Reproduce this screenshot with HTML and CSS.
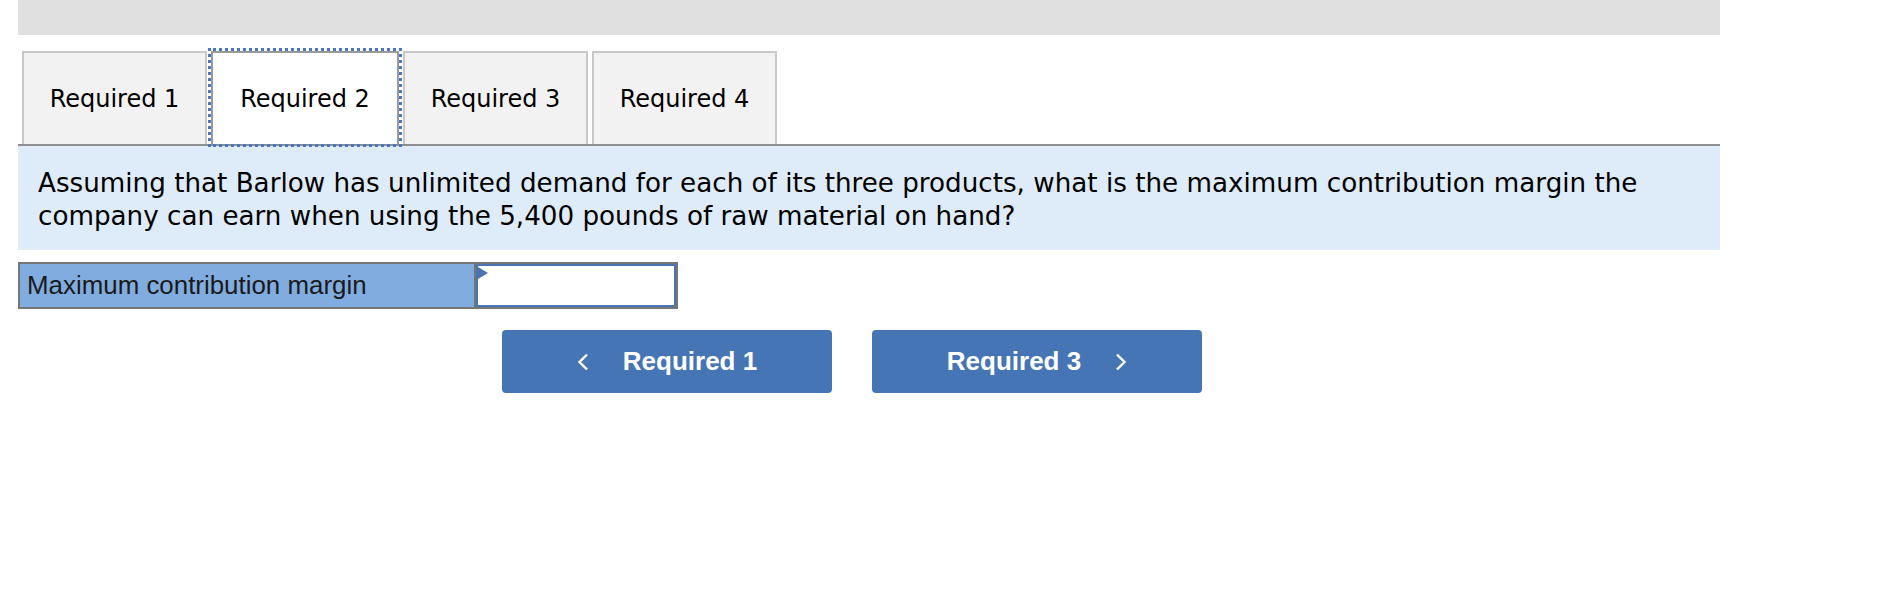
FILE: index.html
```html
<!DOCTYPE html>
<html lang="en">
<head>
<meta charset="utf-8">
<title>Required 2</title>
<link rel="stylesheet" href="styles.css">
</head>
<body>
<div class="page">
  <div class="topbar"></div>
  <div class="tabs">
    <div class="tab">Required 1</div>
    <div class="tab tab-active">Required 2</div>
    <div class="tab">Required 3</div>
    <div class="tab">Required 4</div>
  </div>
  <div class="question">
    Assuming that Barlow has unlimited demand for each of its three products, what is the maximum contribution margin the company can earn when using the 5,400 pounds of raw material on hand?
  </div>
  <div class="answer">
    <div class="answer-label">Maximum contribution margin</div>
    <div class="answer-cell">
      <div class="answer-input"><span class="flag"></span></div>
    </div>
  </div>
  <div class="nav">
    <button class="navbtn">
      <svg class="chev" width="12" height="18" viewBox="0 0 12 18"><polyline points="10,1.5 2.5,9 10,16.5" fill="none" stroke="#fff" stroke-width="2.4"/></svg>
      <span>Required 1</span>
    </button>
    <button class="navbtn">
      <span>Required 3</span>
      <svg class="chev" width="12" height="18" viewBox="0 0 12 18"><polyline points="2,1.5 9.5,9 2,16.5" fill="none" stroke="#fff" stroke-width="2.4"/></svg>
    </button>
  </div>
</div>
</body>
</html>
```

FILE: styles.css
```css
html, body {
  margin: 0;
  padding: 0;
  background: #fff;
}

.page {
  margin-left: 18px;
  width: 1702px;
}

.topbar {
  height: 35px;
  background: #e0e0e0;
}

.tabs {
  display: flex;
  gap: 4px;
  padding: 16px 0 0 4px;
  border-bottom: 2px solid #8e8e8e;
  font-family: "DejaVu Sans", Verdana, sans-serif;
  font-size: 24px;
  color: #000;
}

.tab {
  box-sizing: border-box;
  width: 185px;
  height: 93px;
  display: flex;
  align-items: center;
  justify-content: center;
  background: #f2f2f2;
  border: 2px solid #c8c8c8;
  border-bottom: none;
}

.tab-active {
  background: #fff;
  border-color: #9a9a9a;
  outline: 3px dotted #4a78c0;
  outline-offset: 0;
  width: 188px;
}

.question {
  background: #deebf8;
  padding: 21px 20px 17px 20px;
  font-family: "DejaVu Sans", Verdana, sans-serif;
  font-size: 26.2px;
  line-height: 33px;
  color: #000;
}

.answer {
  margin-top: 12px;
  display: flex;
  width: 660px;
  height: 47px;
  box-sizing: border-box;
  border: 2px solid #767676;
}

.answer-label {
  width: 456px;
  background: #80acdf;
  border-right: 2px solid #767676;
  display: flex;
  align-items: center;
  padding-left: 7px;
  box-sizing: border-box;
  font-family: "Liberation Sans", Arial, sans-serif;
  font-size: 25.9px;
  color: #1a1a1a;
}

.answer-cell {
  flex: 1;
  display: flex;
}

.answer-input {
  flex: 1;
  position: relative;
  border: 2px solid #4a74b4;
  background: #fff;
}

.flag {
  position: absolute;
  left: 0;
  top: 1px;
  width: 0;
  height: 0;
  border-top: 6px solid transparent;
  border-bottom: 6px solid transparent;
  border-left: 10px solid #4a74b4;
}

.nav {
  margin-top: 21px;
  margin-left: 484px;
  display: flex;
  gap: 40px;
}

.navbtn {
  width: 330px;
  height: 63px;
  border: none;
  border-radius: 4px;
  background: #4675b6;
  color: #fff;
  font-family: "Liberation Sans", Arial, sans-serif;
  font-weight: bold;
  font-size: 26px;
  display: flex;
  align-items: center;
  justify-content: center;
  gap: 34px;
  padding: 0;
}

.chev {
  display: block;
}
```
